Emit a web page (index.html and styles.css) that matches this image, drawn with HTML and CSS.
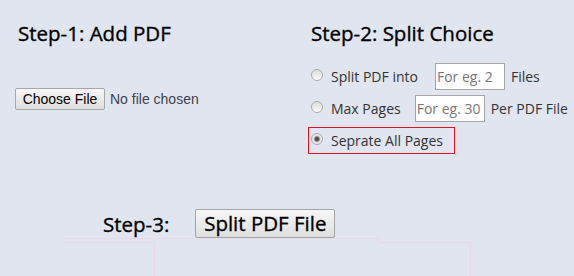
FILE: index.html
```html
<!DOCTYPE html>
<html lang="en">
<head>
<meta charset="utf-8">
<title>Split PDF</title>
<link rel="stylesheet" href="styles.css">
</head>
<body>
<main class="page">
  <div class="steps">
    <section class="col col-add">
      <h2 class="step-title">Step-1: Add PDF</h2>
      <div class="file-row">
        <label class="file-btn" for="pdf">Choose File</label>
        <input class="file-input" id="pdf" type="file" accept="application/pdf">
        <span class="file-name">No file chosen</span>
      </div>
    </section>
    <section class="col col-split">
      <h2 class="step-title">Step-2: Split Choice</h2>
      <div class="options">
        <label class="opt">
          <input class="radio" type="radio" name="mode">
          <span class="opt-text">Split PDF into</span>
          <input class="num gap-lg" type="text" placeholder="For eg. 2">
          <span class="opt-text after">Files</span>
        </label>
        <label class="opt">
          <input class="radio" type="radio" name="mode">
          <span class="opt-text">Max Pages</span>
          <input class="num gap-sm" type="text" placeholder="For eg. 30">
          <span class="opt-text after">Per PDF File</span>
        </label>
        <label class="opt opt-selected">
          <input class="radio" type="radio" name="mode" checked>
          <span class="opt-text">Seprate All Pages</span>
        </label>
      </div>
    </section>
  </div>
  <div class="submit-row">
    <span class="step3">Step-3:</span>
    <button class="split-btn" type="button">Split PDF File</button>
  </div>
  <div class="results">
    <div class="res-main">
      <div class="res-cap"></div>
      <div class="res-cell"></div>
    </div>
    <div class="res-side"></div>
  </div>
</main>
</body>
</html>
```
FILE: styles.css
```css
html, body {
  margin: 0;
  padding: 0;
}
body {
  background: #e1e5ef;
  font-family: "Open Sans", "DejaVu Sans", sans-serif;
  color: #111;
  width: 574px;
  height: 276px;
  overflow: hidden;
}
.steps {
  display: grid;
  grid-template-columns: 293px auto;
  padding: 19px 0 0 15px;
}
.step-title {
  margin: 0;
  padding-left: 3px;
  font-size: 20.5px;
  font-weight: 400;
  line-height: 29px;
  color: #000;
  -webkit-text-stroke: 0.35px #000;
}
.file-row {
  margin-top: 40px;
  display: flex;
  align-items: center;
  height: 22px;
}
.file-input {
  display: none;
}
.file-btn {
  box-sizing: border-box;
  width: 90px;
  height: 22px;
  display: flex;
  align-items: center;
  justify-content: center;
  font-family: "Liberation Sans", Arial, sans-serif;
  font-size: 14px;
  color: #000;
  border: 1px solid #a7a7a7;
  border-radius: 2px;
  background: linear-gradient(#f7f7f7, #dedede);
}
.file-name {
  margin-left: 5px;
  font-family: "Liberation Sans", Arial, sans-serif;
  font-size: 14px;
  color: #3e4250;
}
.options {
  margin-top: 15px;
  display: flex;
  flex-direction: column;
  align-items: flex-start;
  gap: 5px;
}
.opt {
  box-sizing: border-box;
  height: 27px;
  display: flex;
  align-items: center;
  border: 1px solid transparent;
  padding-left: 2px;
  font-size: 14px;
  color: #333;
}
.opt-selected {
  border-color: #e0141e;
  padding-right: 11px;
}
.radio {
  -webkit-appearance: none;
  appearance: none;
  box-sizing: border-box;
  width: 12px;
  height: 12px;
  margin: 0 8px 3px 0;
  border: 1px solid #a9a9a9;
  border-radius: 50%;
  background: linear-gradient(#dcdcdc, #fbfbfb);
}
.radio:checked {
  background: radial-gradient(circle, #4a4a4a 0, #555 1.8px, #9a9a9a 2.6px, #e2e2e2 3.4px, #f6f6f6 100%);
}
.opt-text {
  white-space: nowrap;
}
.after {
  margin-left: 6px;
}
.num {
  box-sizing: border-box;
  width: 70px;
  height: 27px;
  padding: 0 1px;
  border: 1px solid #a6a6a6;
  background: #fff;
  font-family: "Open Sans", sans-serif;
  font-size: 14px;
  color: #333;
  outline: none;
}
.num::placeholder {
  color: #777;
}
.gap-lg {
  margin-left: 17px;
}
.gap-sm {
  margin-left: 14px;
}
.submit-row {
  margin-top: 55px;
  padding-left: 103px;
  display: flex;
  align-items: center;
  height: 29px;
}
.step3 {
  font-size: 20.5px;
  color: #000;
  -webkit-text-stroke: 0.35px #000;
  margin-right: 26px;
}
.split-btn {
  box-sizing: border-box;
  width: 140px;
  height: 29px;
  padding: 0;
  font-family: "Open Sans", sans-serif;
  font-size: 20.5px;
  font-weight: 400;
  line-height: 27px;
  color: #000;
  -webkit-text-stroke: 0.35px #000;
  border: 1px solid #a3a3a3;
  border-radius: 2px;
  background: linear-gradient(#f7f7f7, #dedede);
}
.results {
  display: flex;
  align-items: flex-start;
  margin-left: 64px;
}
.res-main {
  width: 315px;
}
.res-cap {
  height: 3px;
  border-top: 1px solid #e5dae5;
  border-right: 1px solid #e5dae5;
}
.res-cell {
  width: 90px;
  height: 40px;
  border-top: 1px solid #e5dae5;
  border-right: 1px solid #e5dae5;
}
.res-side {
  box-sizing: border-box;
  margin-top: 4px;
  width: 92px;
  height: 40px;
  border-top: 1px solid #e5dae5;
  border-right: 1px solid #e5dae5;
}
```
